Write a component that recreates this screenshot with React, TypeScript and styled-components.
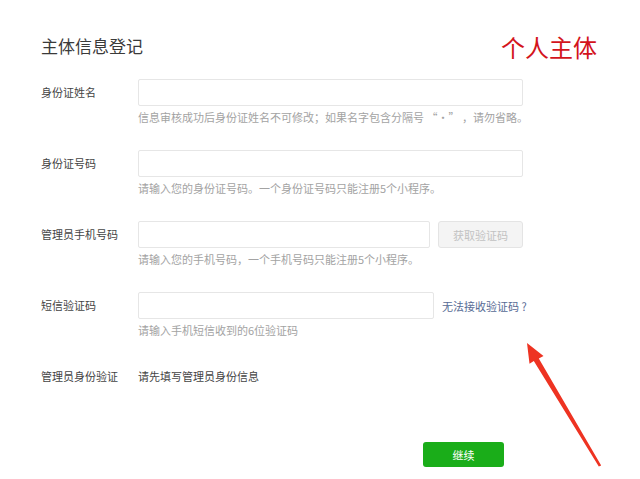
import React from 'react';
import styled, { createGlobalStyle } from 'styled-components';

const GlobalStyle = createGlobalStyle`
  html, body {
    margin: 0;
    padding: 0;
    background: #ffffff;
  }
  body {
    font-family: "Noto Sans CJK SC", "Noto Sans", "Liberation Sans", sans-serif;
    color: #353535;
  }
`;

const Page = styled.div`
  position: relative;
  width: 640px;
  height: 479px;
  box-sizing: border-box;
  padding: 35px 43px 0 41px;
  overflow: hidden;
  background: #fff;
`;

const Header = styled.div`
  display: flex;
  justify-content: space-between;
  align-items: flex-start;
`;

const Title = styled.h1`
  margin: 0;
  font-size: 17px;
  line-height: 22px;
  font-weight: 400;
  color: #3a3a3a;
`;

const Stamp = styled.div`
  font-size: 24px;
  line-height: 30px;
  margin-top: -3px;
  color: #d3141c;
`;

const Form = styled.div`
  display: flex;
  flex-direction: column;
  gap: 25px;
  margin-top: 17px;
`;

const Row = styled.div`
  display: flex;
  align-items: flex-start;
`;

const Label = styled.div`
  width: 97px;
  flex-shrink: 0;
  font-size: 11px;
  line-height: 27px;
  color: #444;
`;

const Field = styled.div`
  display: flex;
  flex-direction: column;
`;

const InputLine = styled.div`
  display: flex;
  align-items: center;
  gap: 8px;
`;

const Input = styled.input<{ $width: number }>`
  width: ${p => p.$width}px;
  height: 27px;
  box-sizing: border-box;
  border: 1px solid #e6e6e6;
  border-radius: 2px;
  background: #fff;
  padding: 0 8px;
  outline: none;
  font-family: inherit;
  font-size: 11px;
`;

const CodeButton = styled.button`
  width: 85px;
  height: 27px;
  box-sizing: border-box;
  border: 1px solid #e4e4e4;
  border-radius: 3px;
  background: #f4f4f4;
  color: #c2c2c2;
  font-family: inherit;
  font-size: 11px;
  padding: 0;
`;

const Link = styled.a`
  font-size: 11px;
  color: #576b95;
  text-decoration: none;
`;

const Hint = styled.div`
  margin-top: 3px;
  font-size: 11px;
  line-height: 16px;
  color: #a3a3a3;
`;

const Value = styled.div`
  font-size: 11px;
  line-height: 27px;
  color: #444;
`;

const Footer = styled.div`
  display: flex;
  padding-left: 382px;
  margin-top: 52px;
`;

const PrimaryButton = styled.button`
  width: 81px;
  height: 25px;
  border: none;
  border-radius: 3px;
  background: #1aad19;
  color: #fff;
  font-family: inherit;
  font-size: 11px;
  padding: 0;
`;

const Arrow = styled.svg`
  position: absolute;
  left: 0;
  top: 0;
  pointer-events: none;
`;

const App: React.FC = () => {
  return (
    <Page>
      <GlobalStyle />
      <Header>
        <Title>主体信息登记</Title>
        <Stamp>个人主体</Stamp>
      </Header>

      <Form>
        <Row>
          <Label>身份证姓名</Label>
          <Field>
            <Input $width={385} />
            <Hint>信息审核成功后身份证姓名不可修改；如果名字包含分隔号 “·” ，请勿省略。</Hint>
          </Field>
        </Row>

        <Row>
          <Label>身份证号码</Label>
          <Field>
            <Input $width={385} />
            <Hint>请输入您的身份证号码。一个身份证号码只能注册5个小程序。</Hint>
          </Field>
        </Row>

        <Row>
          <Label>管理员手机号码</Label>
          <Field>
            <InputLine>
              <Input $width={292} />
              <CodeButton>获取验证码</CodeButton>
            </InputLine>
            <Hint>请输入您的手机号码，一个手机号码只能注册5个小程序。</Hint>
          </Field>
        </Row>

        <Row>
          <Label>短信验证码</Label>
          <Field>
            <InputLine>
              <Input $width={296} />
              <Link href="#">无法接收验证码 ?</Link>
            </InputLine>
            <Hint>请输入手机短信收到的6位验证码</Hint>
          </Field>
        </Row>

        <Row>
          <Label>管理员身份验证</Label>
          <Value>请先填写管理员身份信息</Value>
        </Row>
      </Form>

      <Footer>
        <PrimaryButton>继续</PrimaryButton>
      </Footer>

      <Arrow width="640" height="479" viewBox="0 0 640 479">
        <polygon
          points="527,343 543.5,356 538.8,358.6 601.2,465.4 598.8,466.6 533.8,361 529.5,363.8"
          fill="#ee3322"
        />
      </Arrow>
    </Page>
  );
};

export default App;
